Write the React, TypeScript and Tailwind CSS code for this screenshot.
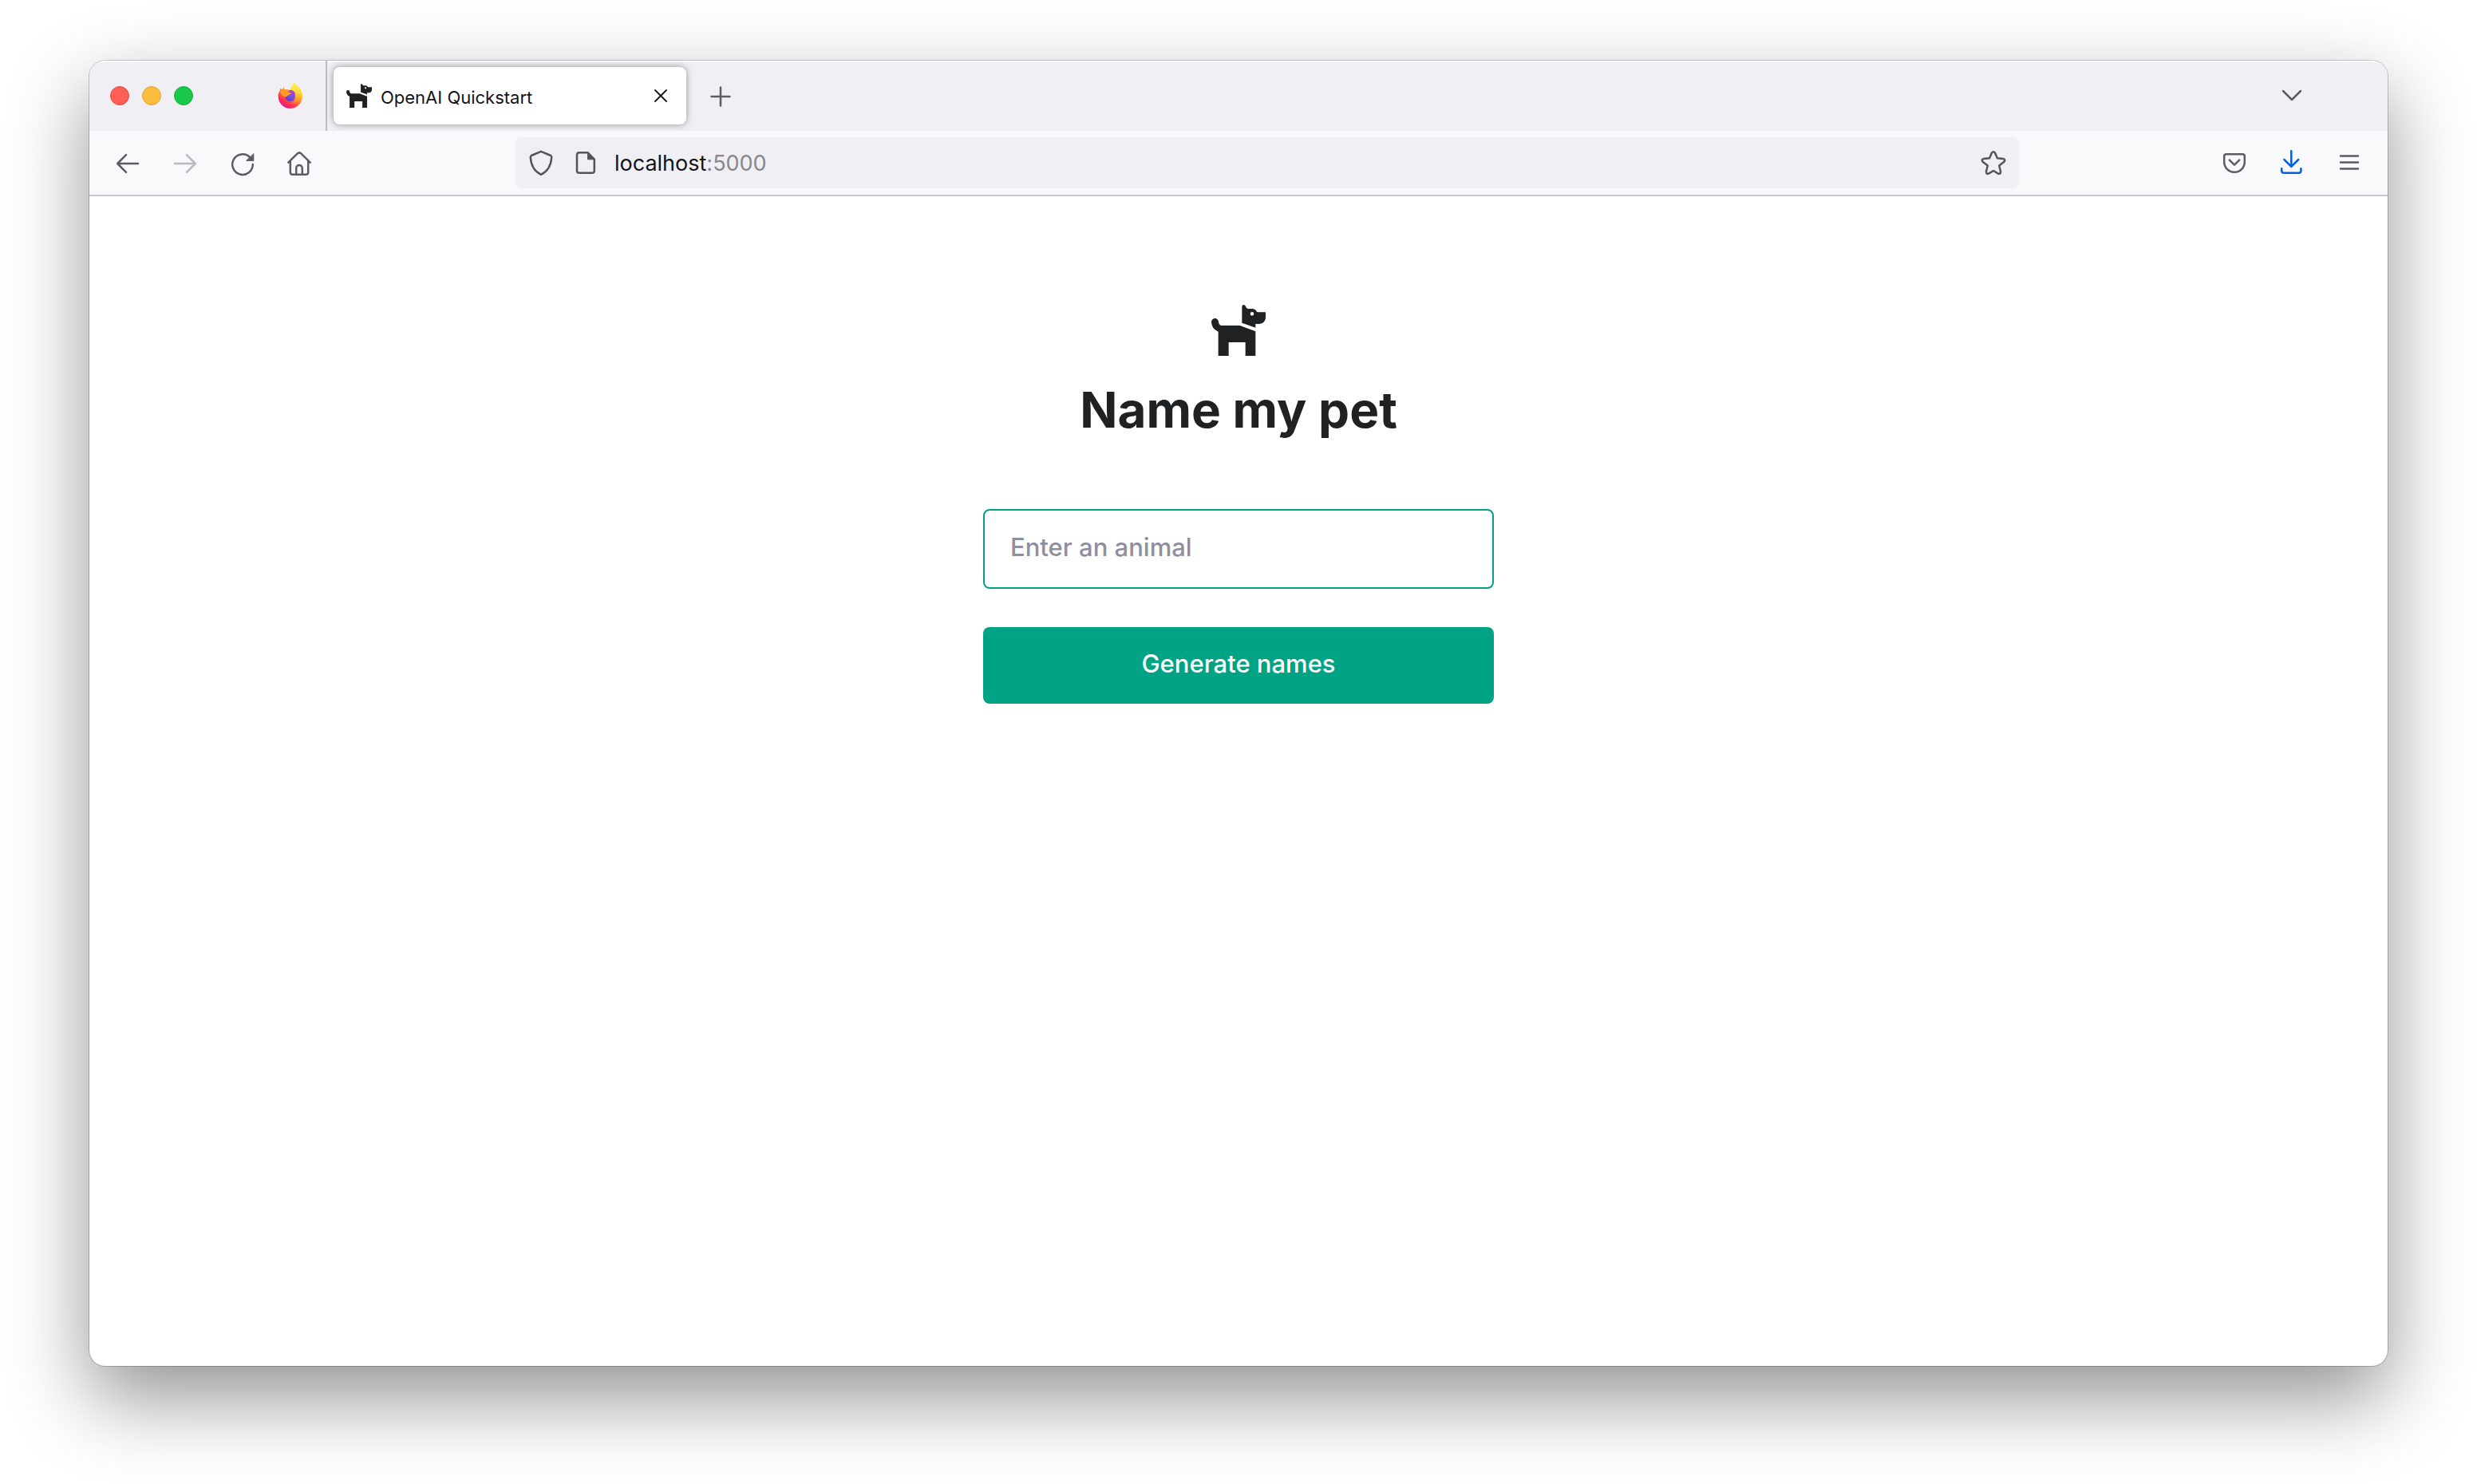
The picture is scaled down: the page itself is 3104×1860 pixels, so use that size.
import type { ReactNode } from "react";

function Icon({ children, className = "" }: { children: ReactNode; className?: string }) {
  return (
    <svg
      viewBox="0 0 32 32"
      aria-hidden="true"
      fill="none"
      stroke="currentColor"
      strokeWidth="2.5"
      strokeLinecap="round"
      strokeLinejoin="round"
      className={`block size-8 shrink-0 overflow-visible ${className}`}
    >
      {children}
    </svg>
  );
}

function IconButton({ label, className = "", disabled, children }: {
  label: string;
  className?: string;
  disabled?: boolean;
  children: ReactNode;
}) {
  return (
    <button type="button" aria-label={label} disabled={disabled} className={`shrink-0 ${className}`}>
      <Icon>{children}</Icon>
    </button>
  );
}

function Dog({ className }: { className: string }) {
  return (
    <svg viewBox="115 66 204 192" aria-hidden="true" fill="#202123" className={className}>
      <path d="M115 131A13 13 0 0 1 142 130Q143 141 151 144H222L281 166V258H243V207H180V258H141V167Q116 156 115 131Z" />
      <path
        fillRule="evenodd"
        d="M230 134V73Q231 66 237 66Q242 67 245 74Q247 80 253 81H272Q282 83 285 91Q286 94 290 94H319V112C319 128 310 138 294 138H281V152ZM275 100A7 7 0 1 0 261 100A7 7 0 1 0 275 100Z"
      />
    </svg>
  );
}

function Firefox() {
  return (
    <svg viewBox="0 0 32 32" aria-hidden="true" className="block size-8">
      <defs>
        <linearGradient id="fx-body" x1="26" y1="3" x2="7" y2="30" gradientUnits="userSpaceOnUse">
          <stop offset="0" stopColor="#fff44f" />
          <stop offset=".3" stopColor="#ffc02e" />
          <stop offset=".55" stopColor="#ff7139" />
          <stop offset=".8" stopColor="#ff2f54" />
          <stop offset="1" stopColor="#e31587" />
        </linearGradient>
        <linearGradient id="fx-flame" x1="20" y1="0" x2="23" y2="28" gradientUnits="userSpaceOnUse">
          <stop offset="0" stopColor="#fff44f" />
          <stop offset=".45" stopColor="#ffd63a" />
          <stop offset=".75" stopColor="#ff9a2c" />
          <stop offset="1" stopColor="#ff5a3c" />
        </linearGradient>
        <linearGradient id="fx-globe" x1="20" y1="8" x2="12" y2="23" gradientUnits="userSpaceOnUse">
          <stop offset="0" stopColor="#b833e1" />
          <stop offset=".5" stopColor="#7a4ee8" />
          <stop offset="1" stopColor="#5b3bc4" />
        </linearGradient>
      </defs>
      <path
        fill="url(#fx-body)"
        d="M20.8 0C23 3.4 27 5 28.6 8C30.5 11 31 14 31 16.5A15.2 15.2 0 0 1 .6 17C.4 14 1.4 11.5 2.6 10L3.3 6.8L5.4 8.2L7.8 5L8.6 8.4C10.5 7.9 13.5 7.8 16 9.8C16.2 6 18 2.5 20.8 0Z"
      />
      <path
        fill="url(#fx-flame)"
        d="M20.8 0C23 3.4 27 5 28.6 8C29.6 10 29.8 14 28.6 18C27 23 22.5 26 17.5 26C22 23.5 24 19 21.5 14C19.5 11 16.4 11 16 9.8C16.2 6 18 2.5 20.8 0Z"
      />
      <circle cx="15.6" cy="16.6" r="6.4" fill="url(#fx-globe)" />
      <path fill="#b833e1" d="M13 9.2Q18 7.4 21.4 11.8L22 15Q18 10.5 13 9.2Z" />
      <path
        fill="#ff9b26"
        d="M8.6 8.4C9.4 9.6 10.5 10.8 12.4 11.2L17 12.4C16.4 14.2 14.2 14.6 12.8 15.4C11.6 16.4 11.4 17.6 9.2 17.4L5.5 16L3 11L5.4 8.2Z"
      />
    </svg>
  );
}

function TabStrip() {
  return (
    <div className="flex h-[88px] items-center bg-[#f0eff4] pl-[26px] pr-26 text-[#5b5b66] shadow-[inset_0_2px_0_rgba(255,255,255,0.7)]">
      <div className="flex gap-4">
        <button type="button" aria-label="Close window" className="size-6 rounded-full border border-[#e14942] bg-[#ff5f57]" />
        <button type="button" aria-label="Minimize window" className="size-6 rounded-full border border-[#dfa133] bg-[#febc3f]" />
        <button type="button" aria-label="Zoom window" className="size-6 rounded-full border border-[#14ae38] bg-[#19c84b]" />
      </div>
      <button type="button" aria-label="Firefox View" className="ml-[106px] shrink-0">
        <Firefox />
      </button>
      <div className="ml-7 h-full w-0.5 bg-[#bbbbc0]" />
      <div className="ml-2 flex h-[72px] w-[442px] items-center rounded-lg bg-white pl-4 pr-4 text-[#15141a] shadow-[0_0_8px_rgba(0,0,0,0.4)]">
        <Dog className="h-8 w-8" />
        <span className="ml-[11px] flex-1 pt-1 text-[22px] leading-7">OpenAI Quickstart</span>
        <IconButton label="Close tab">
          <path strokeWidth="1.8" d="M9 9L23 23M23 9L9 23" />
        </IconButton>
      </div>
      <IconButton label="New tab" className="ml-[27px]">
        <path d="M16 5.5V28.5M4.5 17H27.5" />
      </IconButton>
      <IconButton label="List all tabs" className="ml-auto">
        <path d="M5 10L16 21L27 10" />
      </IconButton>
    </div>
  );
}

function Toolbar() {
  return (
    <div className="flex items-center border-b-2 border-[#cccccf] bg-[#f9f9fb] px-8 py-2 text-[#5b5b66]">
      <nav aria-label="Browser navigation" className="flex gap-10">
        <IconButton label="Back">
          <path d="M3.2 17H29M14 6.2L3.2 17L14 27.8" />
        </IconButton>
        <IconButton label="Forward" disabled className="opacity-40">
          <path d="M28.8 17H3M18 6.2L28.8 17L18 27.8" />
        </IconButton>
        <IconButton label="Reload">
          <path d="M28.8 18A12.8 12.8 0 1 1 25 9" />
          <path fill="currentColor" strokeWidth="1" d="M29.8 5V13.4H21Z" />
        </IconButton>
        <IconButton label="Home">
          <path d="M1.3 15.6L12.5 4.6Q15 2.2 17.5 4.6L28.7 15.6M3.8 13.5V28Q3.8 30.8 6.6 30.8H23.4Q26.2 30.8 26.2 28V13.5M11.2 30.5V22.8A3.8 3.8 0 0 1 18.8 22.8V30.5" />
        </IconButton>
      </nav>
      <div className="flex flex-1 justify-center px-4">
        <div className="flex h-16 w-full max-w-[1884px] items-center rounded-lg bg-[#f0eff4] px-4 text-[#55545b]">
          <IconButton label="Tracking protection">
            <path d="M16 1.8L3.8 7Q2.6 7.6 2.8 9.5C3.4 18 7 26.5 16 30.8C25 26.5 28.6 18 29.2 9.5Q29.4 7.6 28.2 7Z" />
          </IconButton>
          <IconButton label="Site information" className="ml-6">
            <path d="M5 6Q5 3.2 7.8 3.2H18.4L26.8 11.6V26Q26.8 28.8 24 28.8H7.8Q5 28.8 5 26Z" />
            <path fill="currentColor" strokeWidth="1" d="M18.5 3V11.8H27.2Z" />
          </IconButton>
          <a href="#" className="ml-5 flex-1 pt-0.5 text-[27px] leading-9 text-[#15141a]">
            localhost<span className="text-[#88878c]">:5000</span>
          </a>
          <IconButton label="Bookmark this page">
            <path d="M14 3.6Q16 .8 18 3.6L20.9 10.2L28.2 11Q31.6 12 29.4 14.8L23.3 19.6L25 27Q25.2 30.6 22 29.6L16 26L10 29.6Q6.8 30.6 7 27L8.7 19.6L2.6 14.8Q.4 12 3.8 11L11.1 10.2Z" />
          </IconButton>
        </div>
      </div>
      <div className="flex gap-10">
        <IconButton label="Save to Pocket">
          <path d="M5.8 5.2H26.2Q28.8 5.2 28.8 7.8V15A12.8 12.8 0 0 1 3.2 15V7.8Q3.2 5.2 5.8 5.2ZM9.8 12.6L16 18.6L22.2 12.6" />
        </IconButton>
        <IconButton label="Downloads" className="text-[#0061e0]">
          <path d="M15.3 1.2V21M6.4 12L15.3 20.8L24.2 12M3.2 23.2V26Q3.2 28.8 6 28.8H24.6Q27.4 28.8 27.4 26V23.2" />
        </IconButton>
        <IconButton label="Application menu">
          <path d="M5 7.4H27M5 15.4H27M5 23.4H27" />
        </IconButton>
      </div>
    </div>
  );
}

export default function App() {
  return (
    <div className="flex min-h-screen bg-white px-28 pt-[76px] pb-[148px] font-[Inter,sans-serif]">
      <div className="flex flex-1 flex-col overflow-hidden rounded-[20px] bg-white shadow-[0_0_0_1px_rgba(0,0,0,0.2),0_40px_100px_rgba(0,0,0,0.43)]">
        <TabStrip />
        <Toolbar />
        <main className="flex flex-1 flex-col items-center pt-[136px]">
          <Dog className="h-16 w-[68px]" />
          <h1 className="mt-7 text-[62px] leading-[80px] font-bold text-[#202123]">Name my pet</h1>
          <form className="mt-[84px] flex w-[640px] max-w-full flex-col gap-12" onSubmit={(e) => e.preventDefault()}>
            <input
              type="text"
              aria-label="Enter an animal"
              placeholder="Enter an animal"
              className="h-[100px] rounded-lg border-2 border-[#00a383] px-8 pb-1.5 text-[31px] leading-10 font-medium text-[#353740] outline-none placeholder:text-[#8e8ea0]"
            />
            <button type="submit" className="h-24 rounded-lg bg-[#00a383] pb-1 text-[31px] leading-10 font-medium text-white">
              Generate names
            </button>
          </form>
        </main>
      </div>
    </div>
  );
}
